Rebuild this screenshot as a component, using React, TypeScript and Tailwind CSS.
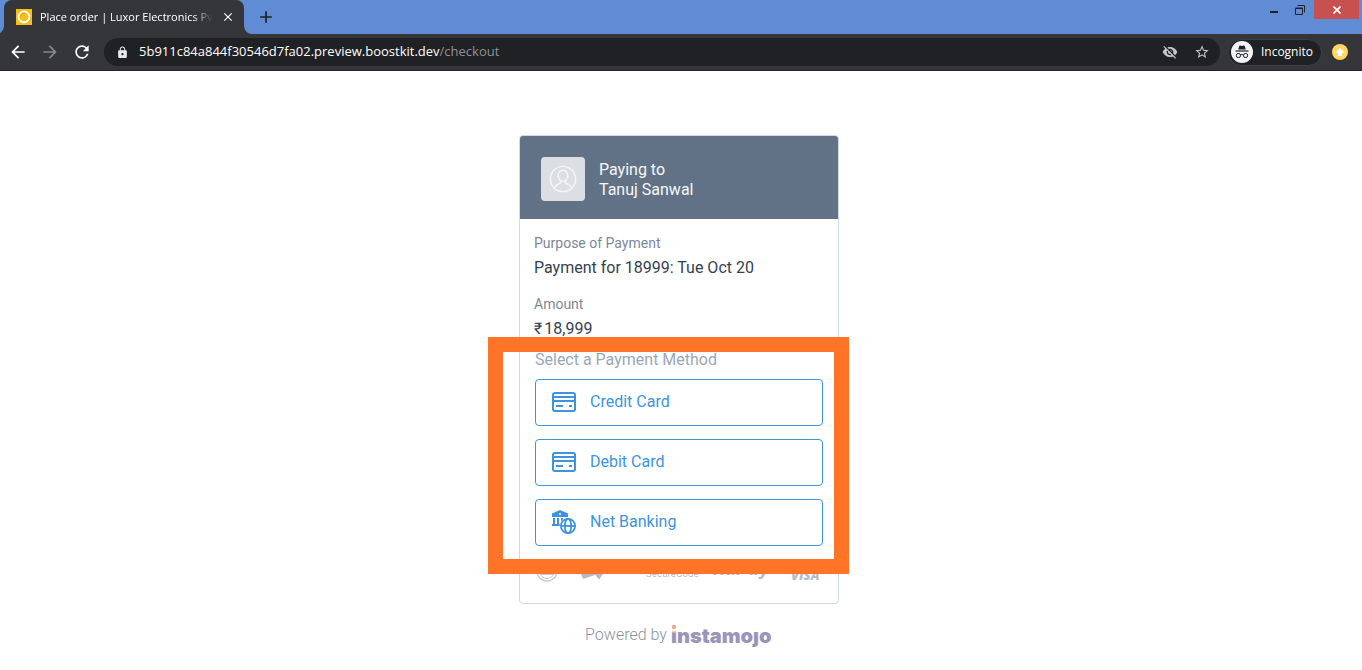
import React, { useState } from "react";
import {
  MdAdd,
  MdArrowBack,
  MdArrowForward,
  MdClose,
  MdLock,
  MdRefresh,
  MdStarBorder,
  MdVisibilityOff,
} from "react-icons/md";

// ── Icons ─────────────────────────────────────────────────────────────────────
function TabFlare({ className }: { className: string }) {
  return (
    <svg viewBox="0 0 8 8" className={`absolute bottom-0 h-2 w-2 ${className}`} aria-hidden="true">
      <path d="M0 0a8 8 0 0 0 8 8H0z" fill="#35363a" />
    </svg>
  );
}

function Favicon() {
  return (
    <svg viewBox="0 0 16 16" className="h-4 w-4 shrink-0" aria-hidden="true">
      <rect width="16" height="16" fill="#fbc108" />
      <circle cx="8.6" cy="8.8" r="5.2" fill="none" stroke="#d99a00" strokeWidth="1.6" />
      <circle cx="8" cy="8" r="5.4" fill="none" stroke="#fff" strokeWidth="2" />
    </svg>
  );
}

function IncognitoIcon() {
  return (
    <svg viewBox="0 0 22 22" className="h-[22px] w-[22px] shrink-0" aria-hidden="true">
      <circle cx="11" cy="11" r="11" fill="#f1f3f4" />
      <path d="M7.2 8.6 8.3 5c.1-.4.5-.6.9-.5l1.8.5 1.8-.5c.4-.1.8.1.9.5l1.1 3.6z" fill="#202124" />
      <path d="M4.5 10h13" stroke="#202124" strokeWidth="1.2" />
      <rect x="5.4" y="12.5" width="4" height="4" rx="1.6" fill="none" stroke="#202124" />
      <rect x="12.6" y="12.5" width="4" height="4" rx="1.6" fill="none" stroke="#202124" />
      <path d="M9.4 14q1.6-1 3.2 0" fill="none" stroke="#202124" />
    </svg>
  );
}

function AvatarIcon() {
  return (
    <svg viewBox="0 0 28 28" className="h-7 w-7" fill="none" stroke="#f3f5f6" strokeWidth="1.4" aria-hidden="true">
      <circle cx="14" cy="14" r="12.6" />
      <ellipse cx="14" cy="10.8" rx="4.8" ry="5.6" />
      <path d="M11.6 15.8v2.2c-3 1.1-5 2.3-6 4.8M16.4 15.8v2.2c3 1.1 5 2.3 6 4.8" />
    </svg>
  );
}

function CardIcon() {
  return (
    <svg viewBox="0 0 24 20" className="h-5 w-6 shrink-0" fill="none" stroke="#3d94dd" strokeWidth="2" aria-hidden="true">
      <rect x="1" y="1" width="22" height="18" rx="2" />
      <path d="M1 5h22M1 9h22M4 14h7M17 14h3" />
    </svg>
  );
}

function BankIcon() {
  return (
    <svg viewBox="0 0 24 24" className="h-6 w-6 shrink-0" aria-hidden="true">
      <path d="M8 0 0 3.6V7h16V3.6z" fill="#3d94dd" />
      <circle cx="8" cy="4" r="1" fill="#fff" />
      <path d="M2 8v7M6 8v7M10 8v7M14 8v2M0 15h10" stroke="#3d94dd" strokeWidth="2" />
      <circle cx="16" cy="16" r="8.4" fill="#fff" />
      <g fill="none" stroke="#3d94dd" strokeWidth="1.8">
        <circle cx="16" cy="16" r="7.1" />
        <ellipse cx="16" cy="16" rx="3.2" ry="7.1" />
        <path d="M9 16h14" />
      </g>
    </svg>
  );
}

function InstamojoLogo() {
  return (
    <svg viewBox="0 0 102 26" className="h-[26px] w-[102px]" role="img" aria-label="instamojo">
      <text x="0" y="21" fill="#9996ba" className="font-['Inter',sans-serif] text-[20px] font-black">
        instamojo
      </text>
      <rect x="0" y="0" width="7" height="9" fill="#fff" />
      <rect x="78" y="0" width="9" height="9" fill="#fff" />
      <circle cx="3" cy="5" r="2.2" fill="#f2a593" />
      <path d="M1 9h4v1.5H1z" fill="#f5d08c" />
    </svg>
  );
}

// ── Browser chrome ────────────────────────────────────────────────────────────
function TabStrip() {
  return (
    <div className="flex h-[34px] items-start justify-between bg-[#608bd5] pl-1">
      <div className="flex h-full items-center">
        <div className="relative flex h-full w-60 items-center rounded-t-lg bg-[#35363a] pl-3 pr-[9px] text-white">
          <TabFlare className="-left-2 -scale-x-100" />
          <TabFlare className="-right-2" />
          <Favicon />
          <span className="ml-2 whitespace-nowrap text-[11px] [mask-image:linear-gradient(to_right,#000_88%,transparent)]">
            Place order | Luxor Electronics Pv
          </span>
          <button type="button" aria-label="Close tab" className="ml-auto shrink-0">
            <MdClose size={14} />
          </button>
        </div>
        <button type="button" aria-label="New tab" className="ml-3 text-[#202124]">
          <MdAdd size={20} />
        </button>
      </div>

      <div className="flex h-[19px] items-center pr-[3px] text-[#202124]">
        <button type="button" aria-label="Minimize" className="flex h-full w-6 items-end justify-center pb-1.5">
          <span className="h-0.5 w-2 bg-[#202124]" />
        </button>
        <button type="button" aria-label="Restore" className="flex h-full w-7 items-center justify-center">
          <svg viewBox="0 0 10 10" className="h-2.5 w-2.5" fill="none" stroke="#202124" aria-hidden="true">
            <path d="M2.5.5h7v7M.5 3.5h7v6h-7zM.5 3h7" />
          </svg>
        </button>
        <button
          type="button"
          aria-label="Close window"
          className="flex h-full w-[45px] items-center justify-center bg-[#c75050]"
        >
          <svg viewBox="0 0 8 8" className="h-2 w-2" fill="none" stroke="#fff" strokeWidth="1.7" aria-hidden="true">
            <path d="m.5.5 7 7M7.5.5l-7 7" />
          </svg>
        </button>
      </div>
    </div>
  );
}

function Toolbar() {
  const [host, setHost] = useState("5b911c84a844f30546d7fa02.preview.boostkit.dev");

  return (
    <div className="flex h-[37px] items-center border-b border-[#232427] bg-[#35363a] pl-2 pr-3.5 text-white">
      <div className="flex shrink-0 gap-3">
        <button type="button" aria-label="Back">
          <MdArrowBack size={20} />
        </button>
        <button type="button" aria-label="Forward" className="text-[#87888b]">
          <MdArrowForward size={20} />
        </button>
        <button type="button" aria-label="Reload">
          <MdRefresh size={20} />
        </button>
      </div>

      <div className="ml-3 flex h-7 min-w-0 flex-1 items-center rounded-full bg-[#202124] pl-3 pr-2.5 text-[13px]">
        <MdLock size={13} className="mr-2.5 shrink-0 text-[#e8eaed]" />
        <input
          aria-label="Address"
          value={host}
          onChange={(e) => setHost(e.target.value)}
          className="field-sizing-content bg-transparent outline-none"
        />
        <span className="text-[#8f9296]">/checkout</span>
        <div className="ml-auto flex gap-4 text-[#c4c7ca]">
          <button type="button" aria-label="Third-party cookies blocked">
            <MdVisibilityOff size={16} />
          </button>
          <button type="button" aria-label="Bookmark this tab">
            <MdStarBorder size={16} />
          </button>
        </div>
      </div>

      <button
        type="button"
        className="ml-2 flex h-[27px] shrink-0 items-center gap-2 rounded-full border border-[#3f4044] bg-[#202124] pl-0.5 pr-2 text-[12px]"
      >
        <IncognitoIcon />
        Incognito
      </button>
      <button
        type="button"
        aria-label="Update browser"
        className="ml-2.5 flex h-4 w-4 shrink-0 items-center justify-center rounded-full bg-[#fdd663]"
      >
        <svg viewBox="0 0 10 10" className="h-2.5 w-2.5" fill="#fff" aria-hidden="true">
          <path d="M5 1 .6 5.400H3V9h4V5.400h2.400z" />
        </svg>
      </button>
    </div>
  );
}

// ── Payment card ──────────────────────────────────────────────────────────────
const METHODS = [
  { label: "Credit Card", Icon: CardIcon },
  { label: "Debit Card", Icon: CardIcon },
  { label: "Net Banking", Icon: BankIcon },
];

function TrustLogos() {
  return (
    <svg viewBox="0 0 288 28" className="mt-3 h-7 w-full" fill="#b4bbc8" aria-hidden="true">
      <g fill="none" stroke="#c6cbd5">
        <circle cx="12" cy="13" r="10" strokeWidth="1.4" />
        <circle cx="12" cy="13" r="7.5" />
        <path d="M6 16h12" strokeWidth="2" />
      </g>
      <path d="M46 4h14v13l-12 4-2-5 4-2z" />
      <path d="m59 13 5 6 5-7" fill="none" stroke="#b4bbc8" strokeWidth="3" />
      <text x="111" y="19" className="font-['Inter',sans-serif] text-[9px]">SecureCode</text>
      <text x="178" y="17" className="font-['Inter',sans-serif] text-[18px] font-bold italic">RuPay</text>
      <text x="256" y="22" className="font-['Open_Sans',sans-serif] text-[13px] font-extrabold italic">VISA</text>
    </svg>
  );
}

function PaymentCard() {
  return (
    <section className="relative w-80 rounded border border-[#cfd8e6] bg-white">
      <header className="flex items-center gap-3.5 rounded-t-[3px] bg-[#617287] px-[21px] pb-[18px] pt-[21px]">
        <div className="flex h-11 w-11 items-center justify-center rounded bg-[#dbdfe4]">
          <AvatarIcon />
        </div>
        <p className="pt-0.5 text-[16px] leading-5 text-[#f7f8f9]">
          Paying to
          <br />
          Tanuj Sanwal
        </p>
      </header>

      <dl className="px-3.5 pt-3 leading-6">
        <dt className="text-[14px] text-[#7d8896]">Purpose of Payment</dt>
        <dd className="pt-px text-[16px] text-[#344152]">Payment for 18999: Tue Oct 20</dd>
        <dt className="mt-3 text-[14px] text-[#7d8896]">Amount</dt>
        <dd className="pt-px text-[16px] text-[#344152]">
          <span className="mr-0.5">₹</span>18,999
        </dd>
      </dl>

      <div className="px-[15px] pb-[17px] pt-[7px]">
        <h2 className="text-[16px] leading-6 text-[#9aa7b6]">Select a Payment Method</h2>
        <div className="mt-[7px] flex flex-col gap-[13px]">
          {METHODS.map(({ label, Icon }) => (
            <button
              key={label}
              type="button"
              className="flex h-[47px] items-center gap-3.5 rounded border border-[#3d94dd] px-4 pb-0.5 text-[16px] text-[#3d94dd]"
            >
              <Icon />
              {label}
            </button>
          ))}
        </div>
        <TrustLogos />
      </div>

      {/* Highlight drawn over the payment methods */}
      <div
        className="pointer-events-none absolute -left-8 top-[201px] h-[237px] w-[361px] border-[15px] border-[#ff7426]"
        aria-hidden="true"
      />
    </section>
  );
}

export default function App() {
  return (
    <div className="min-h-screen bg-white font-['Open_Sans',sans-serif]">
      <TabStrip />
      <Toolbar />
      <main className="flex flex-col items-center pr-1 pt-16 font-['Roboto',sans-serif]">
        <PaymentCard />
        <footer className="mt-[18px] flex items-center gap-1 text-[16px] font-light text-[#8793a3]">
          Powered by
          <a href="#instamojo" className="block">
            <InstamojoLogo />
          </a>
        </footer>
      </main>
    </div>
  );
}
